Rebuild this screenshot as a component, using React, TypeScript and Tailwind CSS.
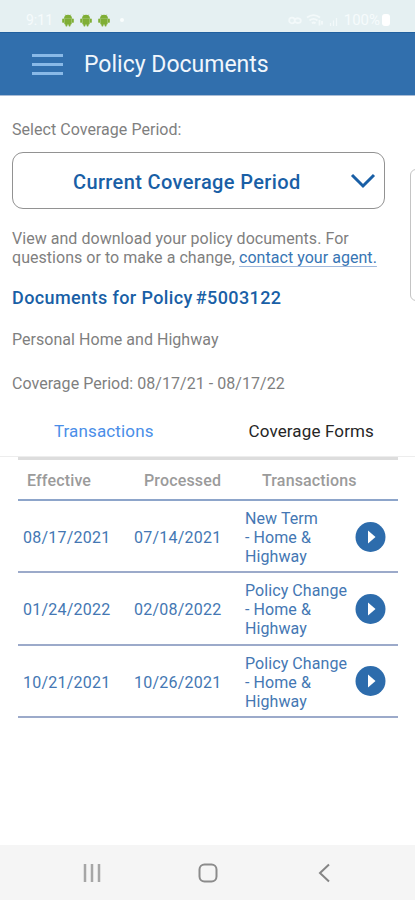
interface Transaction {
  effective: string;
  processed: string;
  title: string;
}

const transactions: Transaction[] = [
  { effective: "08/17/2021", processed: "07/14/2021", title: "New Term" },
  { effective: "01/24/2022", processed: "02/08/2022", title: "Policy Change" },
  { effective: "10/21/2021", processed: "10/26/2021", title: "Policy Change" },
];

function AndroidIcon() {
  return (
    <svg width="12" height="13" viewBox="0 0 12 13" fill="#7fae35">
      <path d="M2 4.800a4 4 0 0 1 8 0z" />
      <path d="M2.300 4.800h7.400v4.700a1 1 0 0 1-1 1H3.300a1 1 0 0 1-1-1z" />
      <rect x="0.2" y="4.600" width="1.900" height="4.200" rx="0.900" />
      <rect x="9.900" y="4.600" width="1.900" height="4.200" rx="0.900" />
      <rect x="3.500" y="9.500" width="1.900" height="3" rx="0.800" />
      <rect x="6.600" y="9.500" width="1.900" height="3" rx="0.800" />
      <path d="M3.200 0.500l1 1.500M8.800 0.500l-1 1.500" stroke="#7fae35" strokeWidth="0.500" />
    </svg>
  );
}

function StatusBar() {
  return (
    <div className="flex h-8 items-center bg-[#e5f0f2] pt-2 pl-[26px] pr-[25px] text-[#f6fbfc]">
      <span className="w-9 text-[14px] leading-4">9:11</span>
      <div className="flex gap-[6px]">
        <AndroidIcon />
        <AndroidIcon />
        <AndroidIcon />
      </div>
      <span className="ml-[10px] h-[4px] w-[4px] rounded-full bg-[#f9fdfd]" />
      <div className="ml-auto flex items-center">
        <svg width="52" height="14" viewBox="0 0 52 14" fill="none" stroke="#f3f9fa" strokeWidth="1.800">
          <circle cx="4" cy="7.500" r="2.800" />
          <path d="M6.800 6.500c2-2 6-1.500 6 1.200s-4 3-6 1" />
          <path d="M19 4.500c4-3 9-3 13 0M21.500 7.500c2.500-2 5.500-2 8 0M24 10.300c1-1 2.500-1 3.500 0" />
          <path d="M31.500 7v5.500M34 8v3.500" />
          <path d="M42.500 10v3M45.500 7.500V13M48.500 5v8" strokeWidth="1.200" />
        </svg>
        <span className="ml-[4px] text-[15px] leading-4">100%</span>
        <span className="ml-[2px] h-[12px] w-[8px] rounded-[3px] bg-white" />
      </div>
    </div>
  );
}

function Header() {
  return (
    <header className="flex h-16 items-center border-t border-b border-t-[#21609f] border-b-[#a9bcd5] bg-[#316fad] pl-8">
      <div className="flex flex-col gap-[6px]">
        <span className="h-[3px] w-[31px] bg-[#89b9e7]" />
        <span className="h-[3px] w-[31px] bg-[#89b9e7]" />
        <span className="h-[3px] w-[31px] bg-[#89b9e7]" />
      </div>
      <h1 className="mt-[2px] ml-[21px] text-[23px] leading-7 text-[#f0f6fc]">Policy Documents</h1>
    </header>
  );
}

function TransactionRow({ effective, processed, title }: Transaction) {
  return (
    <div className="flex h-[72.300px] items-center border-b-2 border-[#9caaca] pt-[3px] pl-[5px] text-[16px] leading-[19px] text-[#4477b3]">
      <span className="w-[111px] tracking-[0.220px]">{effective}</span>
      <span className="w-[111px] tracking-[0.220px]">{processed}</span>
      <span className="w-[110px] tracking-[0.080px] whitespace-nowrap">
        {title}
        <br />- Home &amp;
        <br />
        Highway
      </span>
      <svg className="mb-[2px]" width="31" height="30" viewBox="0 0 31 30">
        <circle cx="15.5" cy="15" r="15" fill="#2d6cac" />
        <path d="M13 8.500v13l7.500-6.500z" fill="#fff" />
      </svg>
    </div>
  );
}

export default function App() {
  return (
    <div className="relative flex h-[900px] w-[415px] flex-col overflow-hidden bg-white font-[Roboto,sans-serif]">
      <StatusBar />
      <Header />
      <main className="flex-1">
        <div className="pt-6 pl-3 text-[16px] tracking-[0.040px] text-[#7f7f7f]">
          <p className="leading-5">Select Coverage Period:</p>
          <button className="mt-3 flex h-[57px] w-[373px] items-center rounded-[11px] border border-[#929292] pl-[60px] text-[#195fa6]">
            <span className="mt-[2px] text-[20px] font-medium tracking-[0.370px]">Current Coverage Period</span>
            <svg className="ml-auto mr-[8px]" width="26" height="16" viewBox="0 0 26 16" fill="none">
              <path d="M2 2l11 11L24 2" stroke="#195fa6" strokeWidth="3" />
            </svg>
          </button>
          <p className="mt-[20px] leading-[19px] whitespace-nowrap">
            View and download your policy documents. For
            <br />
            questions or to make a change,{" "}
            <a className="text-[#3775b4] underline decoration-[#9fb8dc] underline-offset-[3px]">contact your agent.</a>
          </p>
          <h2 className="mt-[21px] text-[18px] leading-5 font-medium tracking-[0.400px] text-[#195fa6]">
            Documents for Policy<span className="ml-[3px]">#5003122</span>
          </h2>
          <p className="mt-[22px] leading-5">Personal Home and Highway</p>
          <p className="mt-[24px] leading-5">Coverage Period: 08/17/21 - 08/17/22</p>
        </div>
        <div className="flex h-[63px] border-b border-[#ededed] pt-[25px] text-center text-[17px] leading-6 tracking-[0.140px]">
          <span className="flex-1 text-[#4a8ee8]">Transactions</span>
          <span className="flex-1 text-[#262626]">Coverage Forms</span>
        </div>
        <div className="ml-[18px] w-[380px] border-t-[3px] border-[#dddddd]">
          <div className="flex h-[41px] items-center border-b-2 border-[#8da5ca] pt-[3px] pl-[9px] text-[16px] font-medium tracking-[0.150px] text-[#9b9b9b]">
            <span className="w-[117px]">Effective</span>
            <span className="w-[118px]">Processed</span>
            <span>Transactions</span>
          </div>
          {transactions.map((t) => (
            <TransactionRow key={t.effective} {...t} />
          ))}
        </div>
      </main>
      {/* edge of the next card, peeking in from the right */}
      <div className="absolute top-[169px] left-[410px] h-[132px] w-8 rounded-[6px] border border-[#c4c4c4]" />
      <nav className="flex h-[55px] items-center bg-[#f5f5f5]">
        <svg className="ml-[82px]" width="20" height="20" viewBox="0 0 20 20" stroke="#a6a6a6" strokeWidth="2.500">
          <path d="M3 1v18M10 1v18M17 1v18" />
        </svg>
        <svg className="ml-[96px]" width="20" height="20" viewBox="0 0 20 20" fill="none" stroke="#8b8b8b" strokeWidth="2">
          <rect x="1.500" y="1.500" width="17" height="17" rx="5" />
        </svg>
        <svg className="ml-[98px]" width="16" height="20" viewBox="0 0 16 20" fill="none" stroke="#858585" strokeWidth="2">
          <path d="M13 1.500L4 10l9 8.500" />
        </svg>
      </nav>
    </div>
  );
}
